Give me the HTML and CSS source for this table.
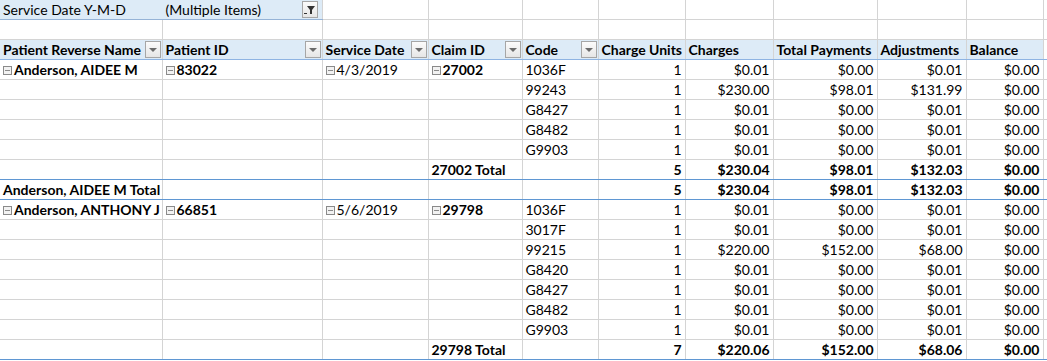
FILE: index.html
```html
<!DOCTYPE html>
<html lang="en">
<head>
    <meta charset="UTF-8">
    <meta name="viewport" content="width=device-width, initial-scale=1.0">
    <title>Claims Pivot</title>
    <link rel="stylesheet" href="styles.css">
</head>

<body>
<table class="pivot">
    <colgroup>
        <col style="width:162px"><col style="width:160px"><col style="width:106px"><col style="width:94px">
        <col style="width:76px"><col style="width:87px"><col style="width:88px"><col style="width:104px">
        <col style="width:89px"><col style="width:77px"><col style="width:20px">
    </colgroup>

    <!-- report filter -->
    <tr class="filter-row">
        <td class="filter-cell">Service Date Y-M-D</td>
        <td class="filter-cell">
            <div class="cell-flex">
                <span>(Multiple Items)</span>
                <span class="drop-btn filter-btn">
                    <svg width="11" height="10" viewBox="0 0 11 10"><path d="M3 1h8L8 5v4H6V5z" fill="#333"/><rect x="0" y="8" width="3" height="1" fill="#333"/></svg>
                </span>
            </div>
        </td>
        <td class="no-line"></td><td></td><td></td><td></td><td></td><td></td><td></td><td></td><td></td>
    </tr>
    <tr class="blank-row">
        <td></td><td></td><td></td><td></td><td></td><td></td><td></td><td></td><td></td><td></td><td></td>
    </tr>

    <!-- headers -->
    <tr class="head-row">
        <th><div class="cell-flex"><span>Patient Reverse Name</span><span class="drop-btn"><i class="caret"></i></span></div></th>
        <th><div class="cell-flex"><span>Patient ID</span><span class="drop-btn"><i class="caret"></i></span></div></th>
        <th><div class="cell-flex"><span>Service Date</span><span class="drop-btn"><i class="caret"></i></span></div></th>
        <th><div class="cell-flex"><span>Claim ID</span><span class="drop-btn"><i class="caret"></i></span></div></th>
        <th><div class="cell-flex"><span>Code</span><span class="drop-btn"><i class="caret"></i></span></div></th>
        <th>Charge Units</th>
        <th>Charges</th>
        <th>Total Payments</th>
        <th>Adjustments</th>
        <th>Balance</th>
        <th class="outside"></th>
    </tr>

    <!-- AIDEE M -->
    <tr>
        <td class="b"><span class="toggle"></span>Anderson, AIDEE M</td>
        <td class="b"><span class="toggle"></span>83022</td>
        <td><span class="toggle"></span>4/3/2019</td>
        <td class="b"><span class="toggle"></span>27002</td>
        <td>1036F</td><td class="n">1</td><td class="n">$0.01</td><td class="n">$0.00</td><td class="n">$0.01</td><td class="n">$0.00</td><td></td>
    </tr>
    <tr>
        <td></td><td></td><td></td><td></td>
        <td>99243</td><td class="n">1</td><td class="n">$230.00</td><td class="n">$98.01</td><td class="n">$131.99</td><td class="n">$0.00</td><td></td>
    </tr>
    <tr>
        <td></td><td></td><td></td><td></td>
        <td>G8427</td><td class="n">1</td><td class="n">$0.01</td><td class="n">$0.00</td><td class="n">$0.01</td><td class="n">$0.00</td><td></td>
    </tr>
    <tr>
        <td></td><td></td><td></td><td></td>
        <td>G8482</td><td class="n">1</td><td class="n">$0.01</td><td class="n">$0.00</td><td class="n">$0.01</td><td class="n">$0.00</td><td></td>
    </tr>
    <tr>
        <td></td><td></td><td></td><td></td>
        <td>G9903</td><td class="n">1</td><td class="n">$0.01</td><td class="n">$0.00</td><td class="n">$0.01</td><td class="n">$0.00</td><td></td>
    </tr>
    <tr class="subtotal">
        <td></td><td></td><td></td>
        <td class="b">27002 Total</td>
        <td></td><td class="n b">5</td><td class="n b">$230.04</td><td class="n b">$98.01</td><td class="n b">$132.03</td><td class="n b">$0.00</td><td></td>
    </tr>
    <tr class="subtotal">
        <td class="b">Anderson, AIDEE M Total</td>
        <td></td><td></td><td></td><td></td>
        <td class="n b">5</td><td class="n b">$230.04</td><td class="n b">$98.01</td><td class="n b">$132.03</td><td class="n b">$0.00</td><td></td>
    </tr>

    <!-- ANTHONY J -->
    <tr>
        <td class="b"><span class="toggle"></span>Anderson, ANTHONY J</td>
        <td class="b"><span class="toggle"></span>66851</td>
        <td><span class="toggle"></span>5/6/2019</td>
        <td class="b"><span class="toggle"></span>29798</td>
        <td>1036F</td><td class="n">1</td><td class="n">$0.01</td><td class="n">$0.00</td><td class="n">$0.01</td><td class="n">$0.00</td><td></td>
    </tr>
    <tr>
        <td></td><td></td><td></td><td></td>
        <td>3017F</td><td class="n">1</td><td class="n">$0.01</td><td class="n">$0.00</td><td class="n">$0.01</td><td class="n">$0.00</td><td></td>
    </tr>
    <tr>
        <td></td><td></td><td></td><td></td>
        <td>99215</td><td class="n">1</td><td class="n">$220.00</td><td class="n">$152.00</td><td class="n">$68.00</td><td class="n">$0.00</td><td></td>
    </tr>
    <tr>
        <td></td><td></td><td></td><td></td>
        <td>G8420</td><td class="n">1</td><td class="n">$0.01</td><td class="n">$0.00</td><td class="n">$0.01</td><td class="n">$0.00</td><td></td>
    </tr>
    <tr>
        <td></td><td></td><td></td><td></td>
        <td>G8427</td><td class="n">1</td><td class="n">$0.01</td><td class="n">$0.00</td><td class="n">$0.01</td><td class="n">$0.00</td><td></td>
    </tr>
    <tr>
        <td></td><td></td><td></td><td></td>
        <td>G8482</td><td class="n">1</td><td class="n">$0.01</td><td class="n">$0.00</td><td class="n">$0.01</td><td class="n">$0.00</td><td></td>
    </tr>
    <tr>
        <td></td><td></td><td></td><td></td>
        <td>G9903</td><td class="n">1</td><td class="n">$0.01</td><td class="n">$0.00</td><td class="n">$0.01</td><td class="n">$0.00</td><td></td>
    </tr>
    <tr class="subtotal">
        <td></td><td></td><td></td>
        <td class="b">29798 Total</td>
        <td></td><td class="n b">7</td><td class="n b">$220.06</td><td class="n b">$152.00</td><td class="n b">$68.06</td><td class="n b">$0.00</td><td></td>
    </tr>
</table>
</body>
</html>
```

FILE: styles.css
```css
body {
    margin: 0;
    background: #ffffff;
    font-family: 'Lato', 'Liberation Sans', sans-serif;
    font-size: 14px;
    color: #000000;
}

.pivot {
    border-collapse: collapse;
    table-layout: fixed;
    width: 1063px;
}

.pivot td, .pivot th {
    height: 19px;
    padding: 0 3px;
    line-height: 19px;
    border: 1px solid #d4d4d4;
    white-space: nowrap;
    overflow: hidden;
    text-align: left;
    font-weight: normal;
}

.pivot tr:first-child td {
    border-top: none;
}
.pivot td:first-child, .pivot th:first-child {
    border-left: none;
}

.cell-flex {
    display: flex;
    align-items: center;
    justify-content: space-between;
}

/* report filter row */
.filter-cell {
    background-color: #ddebf7;
    border-bottom: 1px solid #95b3d7 !important;
}
.filter-row .filter-cell:first-child {
    border-right-color: #ddebf7;
}
.no-line {
    border-top: none;
}

/* header row */
.pivot .head-row th {
    background-color: #ddebf7;
    font-weight: bold;
    border-bottom: 1px solid #8eb4e3;
    padding-right: 1px;
}
.pivot .head-row th.outside {
    background: #ffffff;
}

.drop-btn {
    width: 14px;
    height: 15px;
    border: 1px solid #a6a6a6;
    background: linear-gradient(#fbfbfb, #e6e6e6);
    display: flex;
    align-items: center;
    justify-content: center;
    flex-shrink: 0;
}
.filter-btn {
    margin-right: 1px;
}
.caret {
    width: 0;
    height: 0;
    border-left: 4px solid transparent;
    border-right: 4px solid transparent;
    border-top: 4px solid #6b6b6b;
}

/* body cells */
.pivot .b {
    font-weight: bold;
}
.pivot .n {
    text-align: right;
}
.toggle {
    display: inline-block;
    width: 7px;
    height: 7px;
    border: 1px solid #8a8a8a;
    margin-right: 2px;
    vertical-align: 0;
    background: linear-gradient(#8a8a8a, #8a8a8a) center / 5px 1px no-repeat, #f2f2f2;
}

.pivot .subtotal td {
    border-bottom: 1px solid #5f97d3;
}
```
